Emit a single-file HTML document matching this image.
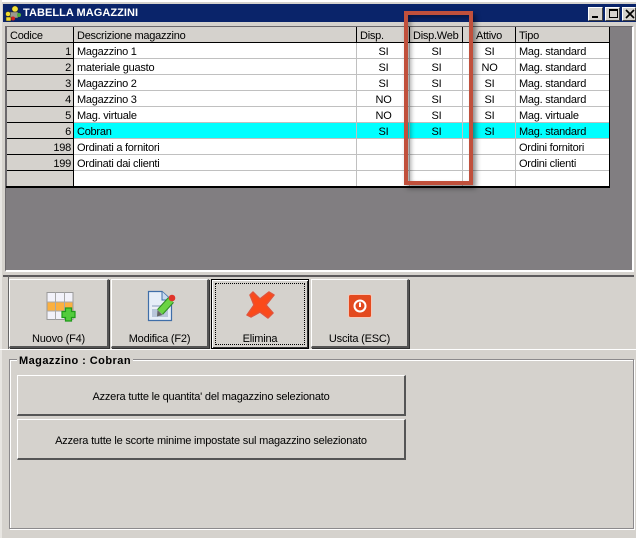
<!DOCTYPE html>
<html lang="it">
<head>
<meta charset="utf-8">
<title>TABELLA MAGAZZINI</title>
<style>
html,body{margin:0;padding:0;background:#d5d2cd}
#w{position:relative;width:636px;height:538px;overflow:hidden;background:#d5d2cd;font:11px/14px "Liberation Sans",sans-serif;color:#000;-webkit-font-smoothing:none}
#w div,#w span{position:absolute;box-sizing:border-box;white-space:nowrap}
table{position:absolute;left:7px;top:27px;border-collapse:separate;border-spacing:0;table-layout:fixed;width:602px;font:11px/12px "Liberation Sans",sans-serif}
td,th{height:16px;padding:3px 2px 0 3px;box-sizing:border-box;overflow:hidden;white-space:nowrap;font-weight:normal;vertical-align:top;border-right:1px solid #c0c0c0;border-bottom:1px solid #c0c0c0;background:#fff;text-align:left;letter-spacing:-.25px}
th{background:#d5d2cd;border-right:1px solid #000;border-bottom:1px solid #000}
td.f{background:#d5d2cd;border-right:1px solid #000;border-bottom:1px solid #000;text-align:right;padding-right:2px}
td.c{text-align:center}
tr.s td:not(.f){background:#0ff}
tr.l td{border-bottom:1px solid #000}
tr td:last-child,tr th:last-child{border-right:0}
.b{background:#d5d2cd;border-top:1px solid #fff;border-left:1px solid #fff;border-right:2px solid #555;border-bottom:2px solid #555;box-shadow:1px 1px 0 #333}
.lab{left:0;right:0;text-align:center;letter-spacing:-.2px}
.wb{top:7px;height:14px;background:#d5d2cd;border-top:1px solid #fff;border-left:1px solid #fff;border-right:1px solid #404040;border-bottom:1px solid #404040}
</style>
</head>
<body>
<div id="w">
<div style="left:0;top:0;width:636px;height:2px;background:#fff"></div>
<div style="left:0;top:0;width:2px;height:538px;background:#e8e6e2"></div>
<div style="left:3px;top:4px;width:633px;height:18px;background:#0a246a"></div>
<svg style="position:absolute;left:4px;top:4px" width="18" height="18" viewBox="0 0 18 18">
<circle cx="11" cy="5" r="3.2" fill="#f5e23a" stroke="#222" stroke-width=".6"/>
<rect x="6" y="8" width="8" height="6" fill="#9a9a90" stroke="#333" stroke-width=".5"/>
<circle cx="4" cy="10" r="2.5" fill="#f0dc30" stroke="#222" stroke-width=".5"/>
<circle cx="15" cy="11" r="2" fill="#4caf3a"/>
<circle cx="9" cy="14.5" r="2" fill="#d02020"/>
<rect x="2" y="13" width="5" height="4" fill="#f0dc30" stroke="#222" stroke-width=".5"/>
</svg>
<span style="left:23px;top:6px;color:#fff;font-weight:bold;font-size:11px;letter-spacing:.05px;line-height:14px">TABELLA MAGAZZINI</span>
<div class="wb" style="left:588px;width:15px"><div style="left:3px;top:8px;width:6px;height:2px;background:#000"></div></div>
<div class="wb" style="left:605px;width:15px"><div style="left:3px;top:1px;width:9px;height:9px;border:1px solid #000;border-top-width:2px"></div></div>
<div class="wb" style="left:622px;width:14px"><svg style="position:absolute;left:2px;top:1px" width="10" height="10" viewBox="0 0 10 10"><path d="M1 1 9 9M9 1 1 9" stroke="#000" stroke-width="1.7"/></svg></div>

<div style="left:5px;top:26px;width:629px;height:246px;background:#817e81;border-top:1px solid #6b686b;border-left:1px solid #6b686b;border-right:2px solid #fff;border-bottom:2px solid #fff"></div>
<table>
<colgroup><col style="width:67px"><col style="width:283px"><col style="width:53px"><col style="width:53px"><col style="width:53px"><col style="width:93px"></colgroup>
<tr><th>Codice</th><th>Descrizione magazzino</th><th>Disp.</th><th>Disp.Web</th><th style="padding-left:13px">Attivo</th><th>Tipo</th></tr>
<tr><td class="f">1</td><td>Magazzino 1</td><td class="c">SI</td><td class="c">SI</td><td class="c">SI</td><td>Mag. standard</td></tr>
<tr><td class="f">2</td><td>materiale guasto</td><td class="c">SI</td><td class="c">SI</td><td class="c">NO</td><td>Mag. standard</td></tr>
<tr><td class="f">3</td><td>Magazzino 2</td><td class="c">SI</td><td class="c">SI</td><td class="c">SI</td><td>Mag. standard</td></tr>
<tr><td class="f">4</td><td>Magazzino 3</td><td class="c">NO</td><td class="c">SI</td><td class="c">SI</td><td>Mag. standard</td></tr>
<tr><td class="f">5</td><td>Mag. virtuale</td><td class="c">NO</td><td class="c">SI</td><td class="c">SI</td><td>Mag. virtuale</td></tr>
<tr class="s"><td class="f">6</td><td>Cobran</td><td class="c">SI</td><td class="c">SI</td><td class="c">SI</td><td>Mag. standard</td></tr>
<tr><td class="f">198</td><td>Ordinati a fornitori</td><td></td><td></td><td></td><td>Ordini fornitori</td></tr>
<tr><td class="f">199</td><td>Ordinati dai clienti</td><td></td><td></td><td></td><td>Ordini clienti</td></tr>
<tr class="l"><td class="f">&nbsp;</td><td></td><td></td><td></td><td></td><td></td></tr>
</table>
<div style="left:6px;top:27px;width:1px;height:160px;background:#6b686b"></div>
<div style="left:609px;top:27px;width:1px;height:160px;background:#000"></div>
<div style="left:6px;top:186px;width:604px;height:2px;background:#000"></div>

<div style="left:404px;top:11px;width:69px;height:174px;border:4px solid #c0503c;box-shadow:3px 3px 5px rgba(0,0,0,.45),inset 3px 3px 5px rgba(0,0,0,.35)"></div>

<div style="left:3px;top:275px;width:631px;height:2px;background:#5c5a5c"></div>
<div style="left:8px;top:276px;width:1px;height:73px;background:#666"></div>
<div style="left:0;top:349px;width:636px;height:1px;background:#fff"></div>

<div class="b" style="left:9px;top:279px;width:100px;height:69px">
<svg style="position:absolute;left:36px;top:12px" width="30" height="30" viewBox="0 0 30 30">
<rect x="1" y=".5" width="26" height="27" fill="#f2f2fa" stroke="#9a9a9a"/>
<rect x="1.500" y="10" width="25" height="8.500" fill="#fbb040"/>
<path d="M9.500 .5V27.500M18.500 .5V27.500M1 10H27M1 19H27" stroke="#a8a8a8" stroke-width="1" fill="none"/>
<path d="M19.500 16h6v3.500H29v6h-3.500V29h-6v-3.500H16v-6h3.500z" fill="#52cc3c" stroke="#1f9a1a" stroke-width="1.200"/>
</svg>
<span class="lab" style="top:52px">Nuovo (F4)</span></div>

<div class="b" style="left:111px;top:279px;width:98px;height:69px">
<svg style="position:absolute;left:35px;top:10px" width="30" height="32" viewBox="0 0 30 32">
<path d="M1.500 1.500H15L24.500 10V30.500H1.500Z" fill="#e6eef8" stroke="#3f6ea8" stroke-width="1.200"/>
<path d="M15 1.500V10H24" fill="#c8daf0" stroke="#3f6ea8"/>
<rect x="5" y="15" width="16" height="12" fill="#b8c6da"/>
<path d="M5 18H20" stroke="#fff" stroke-width="1.500"/>
<path d="M13 22 24 10" stroke="#2f8a24" stroke-width="8" fill="none"/>
<path d="M13 22 24 10" stroke="#6ad444" stroke-width="6" fill="none"/>
<path d="M10.500 20 15.500 25 10 26.500Z" fill="#666"/>
<circle cx="25" cy="8" r="3.300" fill="#e0342a"/>
</svg>
<span class="lab" style="top:52px">Modifica (F2)</span></div>

<div style="left:211px;top:279px;width:98px;height:70px;background:#d5d2cd;border:1px solid #000;box-shadow:inset 1px 1px 0 #fff,inset -1px -1px 0 #333">
<div style="left:3px;top:3px;width:90px;height:62px;border:1px dotted #000"></div>
<svg style="position:absolute;left:34px;top:11px" width="30" height="28" viewBox="0 0 30 28">
<path d="M4 4 7 1 14 8 23 1 28 4 20 14 27 22 22 27 14 21 5 26 1 24 8 14Z" fill="#fb4a1a" stroke="#e2533a" stroke-width="1.500" stroke-linejoin="round"/>
</svg>
<span class="lab" style="top:52px">Elimina</span></div>

<div class="b" style="left:311px;top:279px;width:98px;height:69px">
<svg style="position:absolute;left:36px;top:14px" width="24" height="24" viewBox="0 0 24 24">
<rect x=".5" y=".5" width="23" height="23" rx="2" fill="#e34a1f" stroke="#f6c9ba"/>
<circle cx="12" cy="12" r="5.500" fill="none" stroke="#fff" stroke-width="2"/>
<path d="M12 8.500V13" stroke="#fff" stroke-width="2"/>
</svg>
<span class="lab" style="top:52px">Uscita (ESC)</span></div>

<div style="left:9px;top:359px;width:625px;height:170px;border:1px solid #8c8a8c;box-shadow:inset 1px 1px 0 #fff,1px 1px 0 #fff"></div>
<span style="left:17px;top:354px;padding:0 2px;background:#d5d2cd;font-weight:bold;font-size:11px;letter-spacing:.45px">Magazzino : Cobran</span>

<div class="b" style="left:17px;top:375px;width:389px;height:41px;box-shadow:none">
<span class="lab" style="top:14px">Azzera tutte le quantita' del magazzino selezionato</span></div>
<div class="b" style="left:17px;top:419px;width:389px;height:41px;box-shadow:none">
<span class="lab" style="top:14px">Azzera tutte le scorte minime impostate sul magazzino selezionato</span></div>
</div>
</body>
</html>
